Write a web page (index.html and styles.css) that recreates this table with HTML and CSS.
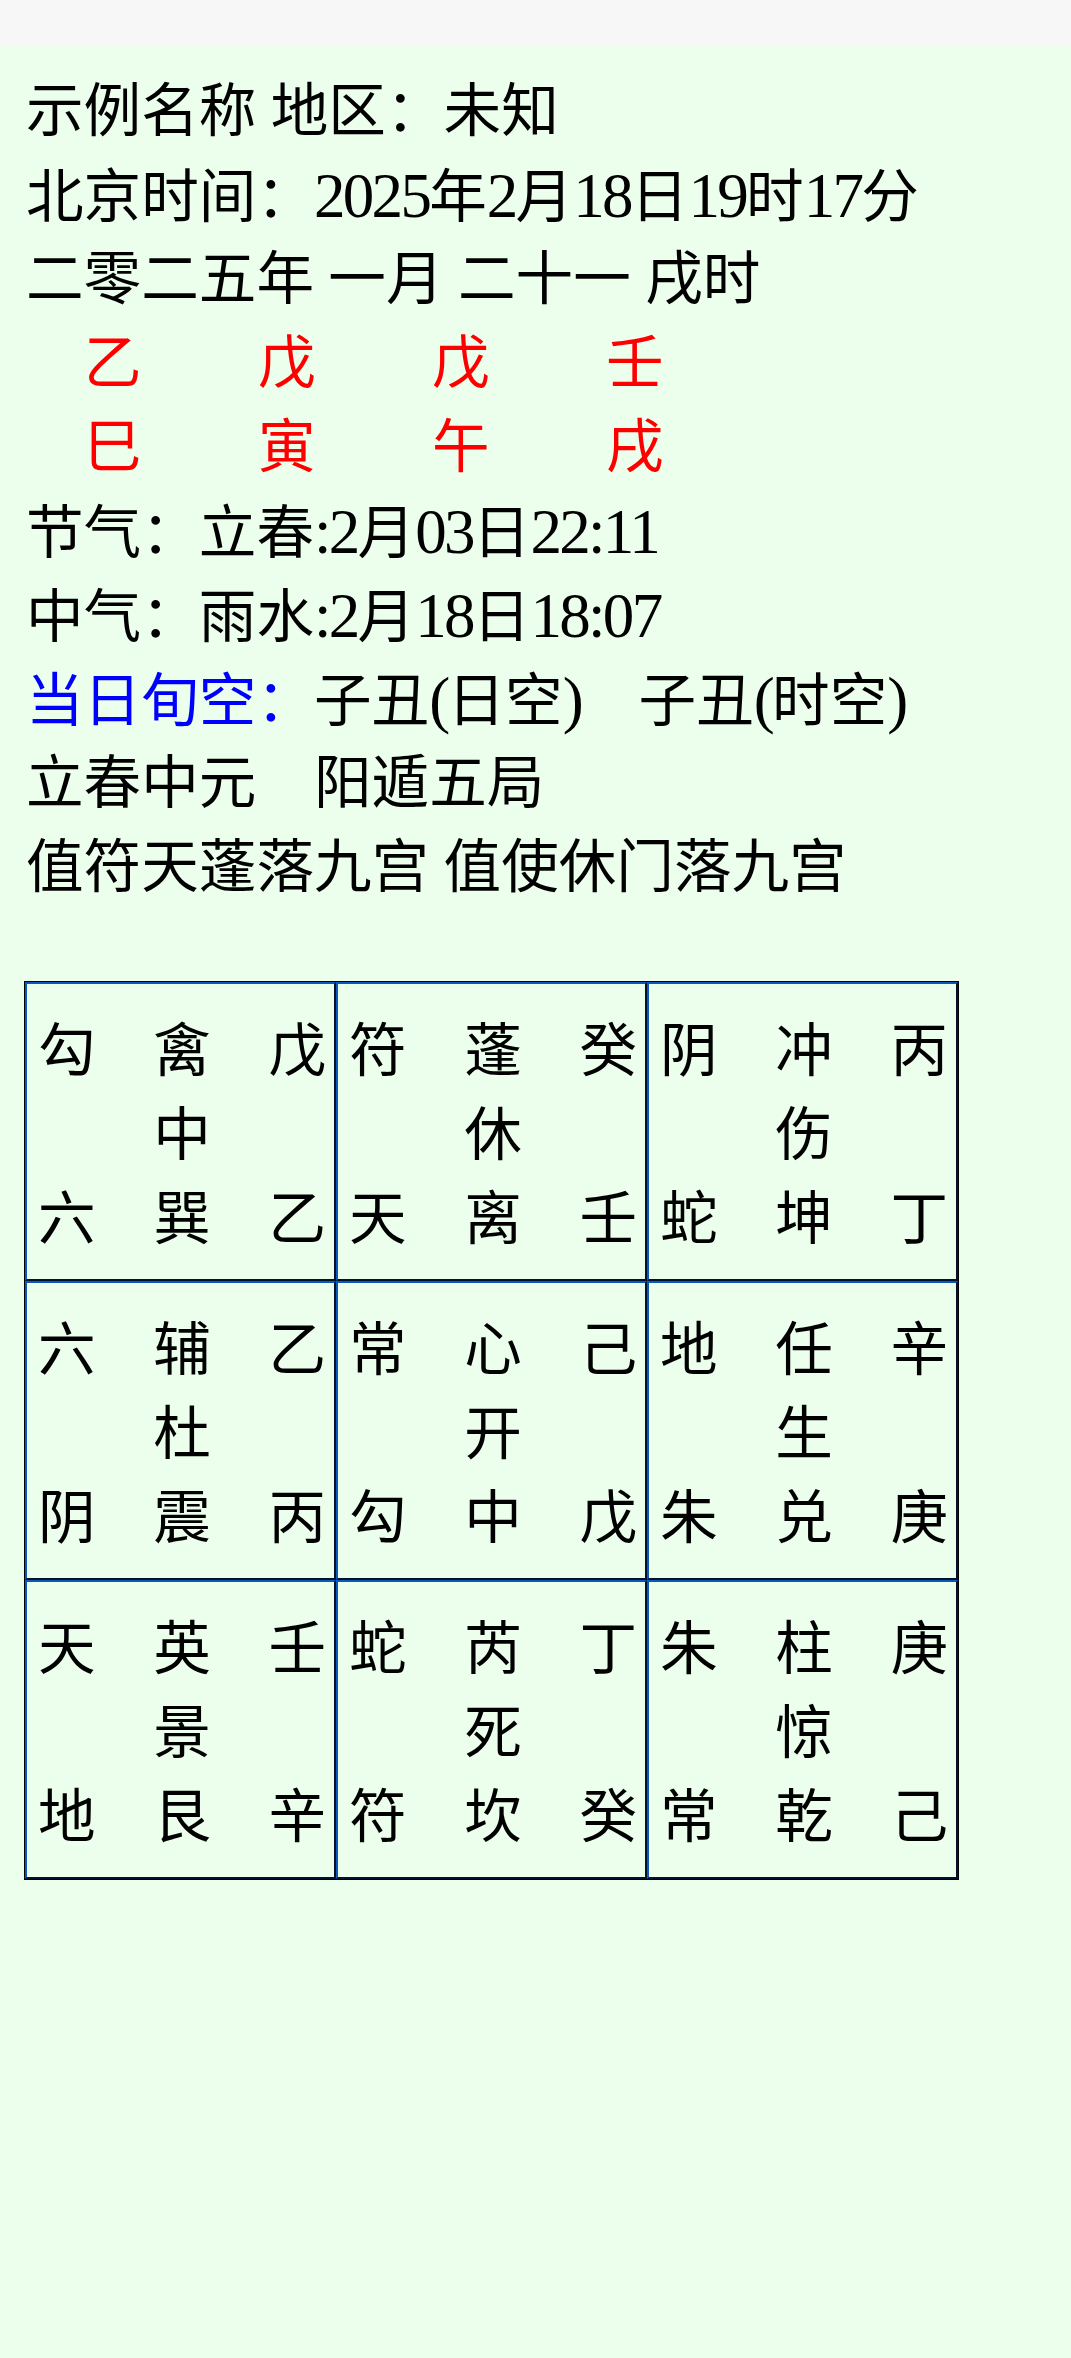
FILE: index.html
```html
<!DOCTYPE html>
<html lang="zh-CN">
<head>
<meta charset="utf-8">
<title>奇门遁甲</title>
<link rel="stylesheet" href="styles.css">
</head>
<body>
<div class="topbar"></div>
<main class="page">
  <div class="info">
    <div class="line">示例名称 地区：未知</div>
    <div class="line">北京时间：<span class="n">2025</span>年<span class="n">2</span>月<span class="n">18</span>日<span class="n">19</span>时<span class="n">17</span>分</div>
    <div class="line">二零二五年 一月 二十一 戌时</div>
    <div class="line gz"><span>乙</span><span>戊</span><span>戊</span><span>壬</span></div>
    <div class="line gz"><span>巳</span><span>寅</span><span>午</span><span>戌</span></div>
    <div class="line">节气：立春<span class="n">:2</span>月<span class="n">03</span>日<span class="n">22:11</span></div>
    <div class="line">中气：雨水<span class="n">:2</span>月<span class="n">18</span>日<span class="n">18:07</span></div>
    <div class="line"><span class="blue">当日旬空：</span>子丑<span class="n">(</span>日空<span class="n">)</span>&nbsp;&nbsp;&nbsp;&nbsp;子丑<span class="n">(</span>时空<span class="n">)</span></div>
    <div class="line">立春中元&nbsp;&nbsp;&nbsp;&nbsp;阳遁五局</div>
    <div class="line">值符天蓬落九宫 值使休门落九宫</div>
  </div>

  <div class="board">
    <div class="cell"><span>勾</span><span>禽</span><span>戊</span><span></span><span>中</span><span></span><span>六</span><span>巽</span><span>乙</span></div>
    <div class="cell"><span>符</span><span>蓬</span><span>癸</span><span></span><span>休</span><span></span><span>天</span><span>离</span><span>壬</span></div>
    <div class="cell"><span>阴</span><span>冲</span><span>丙</span><span></span><span>伤</span><span></span><span>蛇</span><span>坤</span><span>丁</span></div>

    <div class="cell"><span>六</span><span>辅</span><span>乙</span><span></span><span>杜</span><span></span><span>阴</span><span>震</span><span>丙</span></div>
    <div class="cell"><span>常</span><span>心</span><span>己</span><span></span><span>开</span><span></span><span>勾</span><span>中</span><span>戊</span></div>
    <div class="cell"><span>地</span><span>任</span><span>辛</span><span></span><span>生</span><span></span><span>朱</span><span>兑</span><span>庚</span></div>

    <div class="cell"><span>天</span><span>英</span><span>壬</span><span></span><span>景</span><span></span><span>地</span><span>艮</span><span>辛</span></div>
    <div class="cell"><span>蛇</span><span>芮</span><span>丁</span><span></span><span>死</span><span></span><span>符</span><span>坎</span><span>癸</span></div>
    <div class="cell"><span>朱</span><span>柱</span><span>庚</span><span></span><span>惊</span><span></span><span>常</span><span>乾</span><span>己</span></div>
  </div>
</main>
</body>
</html>
```

FILE: styles.css
```css
html, body {
  margin: 0;
  padding: 0;
}

body {
  background: #ecffec;
  font-family: "Liberation Serif", "Noto Sans CJK SC", serif;
  font-size: 57.6px;
  color: #000;
  min-height: 2358px;
}

.topbar {
  height: 45px;
  background: #f7f7f7;
}

.page {
  padding-top: 25px;
}

.info {
  padding-left: 26px;
  line-height: 84px;
}

.line {
  height: 84px;
  white-space: nowrap;
}

.n {
  font-size: 63px;
  letter-spacing: -2.7px;
}

.blue {
  color: #0000ff;
}

.gz {
  display: flex;
  gap: 116.4px;
  padding-left: 58px;
  color: #ff0000;
}

.gz span {
  width: 57.6px;
}

.board {
  margin: 71px 0 0 24px;
  width: 935px;
  box-sizing: border-box;
  border: 1px solid #000;
  display: grid;
  grid-template-columns: repeat(3, 1fr);
  grid-auto-rows: 299px;
}

.cell {
  box-sizing: border-box;
  border-top: 2px solid #0a58b8;
  border-left: 2px solid #0a58b8;
  border-right: 2px solid #03122c;
  border-bottom: 2px solid #03122c;
  padding: 20px 8px 0 11px;
  display: grid;
  grid-template-columns: 57.6px 57.6px 57.6px;
  grid-auto-rows: 84px;
  justify-content: space-between;
  font-family: "Noto Sans CJK SC", sans-serif;
  line-height: 84px;
}
```
